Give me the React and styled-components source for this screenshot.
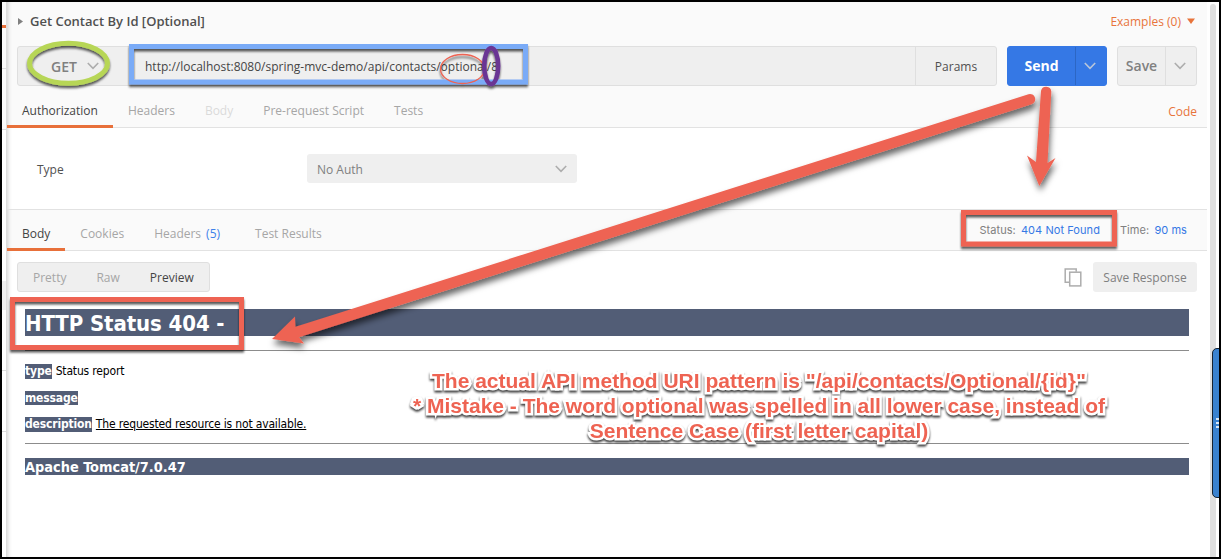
import React from 'react';
import styled, { createGlobalStyle } from 'styled-components';

const Global = createGlobalStyle`
  * { box-sizing: border-box; }
  body { margin: 0; background: #000; overflow: hidden; }
`;

const Frame = styled.div`
  position: relative;
  width: 1221px;
  height: 559px;
  padding: 2px;
  background: #000;
  display: flex;
  overflow: hidden;
  font-family: 'Open Sans', 'Liberation Sans', sans-serif;
  font-size: 12px;
  color: #505050;
`;

const Sidebar = styled.div`
  width: 5px;
  flex: none;
  display: flex;
  flex-direction: column;
  background: #fff;
  border-right: 1px solid #dcdcdc;
`;
const Slice = styled.div`
  height: ${(p) => p.$h}px;
  background: ${(p) => p.$bg || '#fff'};
  border-bottom: ${(p) => p.$line || 0}px solid ${(p) => p.$color || '#dcdcdc'};
`;

const Panel = styled.main`
  width: 1200px;
  height: 555px;
  display: flex;
  flex-direction: column;
  background: #fff;
  box-shadow: inset 4px 0 4px -3px rgba(0, 0, 0, 0.18);
`;

const Gutter = styled.div`
  flex: none;
  width: 12px;
  padding: 2px 3px 0;
  background: #fff;
`;
const Thumb = styled.div`
  width: 6px;
  height: 553px;
  border-radius: 3px 3px 0 0;
  background: #e0e0e0;
`;

const RequestArea = styled.section`
  height: 126px;
  border-bottom: 1px solid #e2e2e2;
  background: rgba(0, 0, 0, 0.02);
`;

const TitleRow = styled.header`
  height: 44px;
  padding: 0 12px 6px 11px;
  display: flex;
  align-items: center;
  justify-content: space-between;
`;
const Title = styled.h1`
  margin: 0;
  display: flex;
  align-items: center;
  gap: 7px;
  font-size: 13px;
  font-weight: 600;
`;
const LinkText = styled.span`
  display: inline-flex;
  align-items: center;
  gap: 6px;
  color: #e8743b;
  font-size: 12px;
  white-space: nowrap;
`;

const UrlRow = styled.div`
  display: flex;
  gap: 10px;
  padding-left: 10px;
  height: 40px;
`;
const Field = styled.div`
  width: 980px;
  display: flex;
  border: 1px solid #dfdfdf;
  border-radius: 3px;
  background: #efefef;
`;
const Method = styled.div`
  width: 112px;
  display: flex;
  align-items: center;
  padding-left: 33px;
  gap: 10px;
  border-right: 1px solid #dfdfdf;
  font-size: 14px;
  font-weight: 600;
  color: #808080;
`;
const Url = styled.div`
  flex: 1;
  padding-left: 15px;
  line-height: 39px;
  color: #454545;
  white-space: nowrap;
`;
const Params = styled.div`
  width: 81px;
  border-left: 1px solid #dfdfdf;
  text-align: center;
  line-height: 39px;
  color: #505050;
`;
const SplitButton = styled.div`
  width: ${(p) => p.$w}px;
  display: flex;
  border-radius: 3px;
  font-size: 14px;
  font-weight: ${(p) => (p.$primary ? 700 : 600)};
  color: ${(p) => (p.$primary ? '#fff' : '#808080')};
  background: ${(p) => (p.$primary ? '#3578e5' : '#efefef')};
  border: 1px solid ${(p) => (p.$primary ? '#3578e5' : '#dfdfdf')};
`;
const SplitMain = styled.div`
  flex: 1;
  text-align: center;
  line-height: 38px;
`;
const SplitToggle = styled.div`
  width: 31px;
  display: flex;
  align-items: center;
  justify-content: center;
  padding-right: 2px;
  border-left: 1px solid ${(p) => (p.$primary ? '#2c66c4' : '#dfdfdf')};
`;

const Tabs = styled.nav`
  height: ${(p) => p.$h}px;
  display: flex;
`;
const Tab = styled.div`
  padding: ${(p) => p.$top}px 15px 0;
  line-height: 18px;
  font-size: 12px;
  white-space: nowrap;
  color: ${(p) => (p.$active ? '#444' : p.$faint ? '#dadada' : '#a6a6a6')};
  border-bottom: 3px solid ${(p) => (p.$active ? '#e8703a' : 'transparent')};
`;
const Count = styled.span`
  margin: 0 5px 0 5px;
  color: #3f82ea;
`;
const TabsEnd = styled.div`
  margin-left: auto;
  padding: ${(p) => p.$top}px 10px 0 0;
  line-height: 18px;
`;

const AuthArea = styled.section`
  height: 81px;
  display: flex;
  align-items: center;
  padding-left: 30px;
`;
const AuthLabel = styled.label`
  width: 270px;
  padding-top: 1px;
`;
const Select = styled.div`
  width: 270px;
  height: 29px;
  display: flex;
  align-items: center;
  justify-content: space-between;
  padding: 1px 10px 0;
  border-radius: 3px;
  background: #efefef;
  color: #808080;
`;

const ResponseTabs = styled.section`
  height: 42px;
  border-top: 1px solid #e2e2e2;
  border-bottom: 1px solid #e2e2e2;
  background: rgba(0, 0, 0, 0.02);
`;
const Metrics = styled.div`
  margin-left: auto;
  padding: 11px 20px 0 0;
  display: flex;
  gap: 20px;
  font-family: Inter, Roboto, sans-serif;
  font-size: 11px;
  line-height: 18px;
  letter-spacing: 0.06px;
  color: #808080;
`;
const Value = styled.span`
  margin-left: 2px;
  color: #3578e5;
`;

const Toolbar = styled.div`
  height: 58px;
  display: flex;
  align-items: flex-start;
  padding: 11px 10px 0;
`;
const Segments = styled.div`
  width: 193px;
  height: 30px;
  display: flex;
  gap: 30px;
  padding-left: 15px;
  border: 1px solid #dfdfdf;
  border-radius: 3px;
  background: #efefef;
  line-height: 29px;
`;
const Segment = styled.span`
  color: ${(p) => (p.$active ? '#444' : '#a6a6a6')};
`;
const Actions = styled.div`
  margin-left: auto;
  display: flex;
  align-items: center;
  gap: 11px;
`;
const SaveResponse = styled.div`
  width: 104px;
  height: 30px;
  line-height: 31px;
  text-align: center;
  border-radius: 3px;
  background: #efefef;
  color: #808080;
  white-space: nowrap;
`;

const Preview = styled.article`
  width: 1182px;
  padding-left: 18px;
  font-family: 'DejaVu Sans Condensed', 'DejaVu Sans', sans-serif;
  color: #000;
`;
const Banner = styled.div`
  height: ${(p) => p.$h}px;
  line-height: ${(p) => p.$lh}px;
  font-size: ${(p) => p.$size}px;
  font-weight: 700;
  letter-spacing: ${(p) => p.$ls || 0}px;
  white-space: nowrap;
  color: #fff;
  background: #525d76;
`;
const Rule = styled.hr`
  height: 1px;
  margin: ${(p) => p.$m};
  border: 0;
  background: #8c8c8c;
`;
const Line = styled.p`
  margin: 0 0 12px;
  height: 14.6px;
  line-height: 14.6px;
  display: flex;
  gap: 4px;
  font-size: 12px;
  letter-spacing: -0.16px;
`;
const Key = styled.b`
  color: #fff;
  background: #525d76;
`;

const SideHandle = styled.div`
  position: absolute;
  left: 1212px;
  top: 348px;
  width: 14px;
  height: 150px;
  border: 1.5px solid #16222f;
  border-radius: 5px;
  background: #3a82cf;
  display: flex;
  flex-direction: column;
  justify-content: center;
  gap: 2px;
  padding-left: 3px;
`;
const Grip = styled.i`
  width: 4px;
  height: 2px;
  background: #dbe8f6;
`;
const RightEdge = styled.div`
  position: absolute;
  right: 0;
  top: 0;
  width: 2px;
  height: 559px;
  background: #000;
`;

const Markup = styled.svg`
  position: absolute;
  left: 0;
  top: 0;
  pointer-events: none;
  overflow: visible;
`;
const Callout = styled.div`
  position: absolute;
  left: 379px;
  top: 368px;
  width: 760px;
  text-align: center;
  font: 700 21px/25px 'Liberation Sans', Arial, sans-serif;
  color: #ee6352;
  -webkit-text-stroke: 5px #fff;
  paint-order: stroke fill;
  stroke-linejoin: round;
  filter: drop-shadow(0 2px 1px rgba(0, 0, 0, 0.75));
`;
const CalloutLine = styled.div`
  white-space: nowrap;
`;

const Chevron = ({ color = '#adadad' }) => (
  <svg width="12" height="8" viewBox="0 0 12 8" fill="none" stroke={color} strokeWidth="1.6">
    <path d="M0.8 1 L6 6.3 L11.2 1" />
  </svg>
);

const CopyIcon = () => (
  <svg width="18" height="19" viewBox="0 0 18 19" fill="none" stroke="#adadad" strokeWidth="1.5">
    <path d="M5 14.3H1.2V1h11v2.8" />
    <rect x="5.7" y="4.2" width="11.1" height="13.7" />
  </svg>
);

export default function App() {
  return (
    <Frame>
      <Global />
      <Sidebar>
        <Slice $h={26} $line={3} $color="#e8703a" $bg="#fafafa" />
        <Slice $h={41} $line={1} $bg="#fafafa" />
        <Slice $h={61} $line={1} $bg="#fafafa" />
        <Slice $h={151} />
        <Slice $h={29} $bg="#efefef" />
        <Slice $h={61} $line={1} />
        <Slice $h={61} $line={1} />
      </Sidebar>
      <Panel>
        <RequestArea>
          <TitleRow>
            <Title>
              <svg width="5" height="7"><path d="M0 0L5 3.5L0 7Z" fill="#808080" /></svg>
              Get Contact By Id [Optional]
            </Title>
            <LinkText>
              Examples (0)
              <svg width="8" height="6"><path d="M0 0.5H8L4 6Z" fill="#e8743b" /></svg>
            </LinkText>
          </TitleRow>
          <UrlRow>
            <Field>
              <Method>GET <Chevron /></Method>
              <Url>http://localhost:8080/spring-mvc-demo/api/contacts/optional/8</Url>
              <Params>Params</Params>
            </Field>
            <SplitButton $w={100} $primary>
              <SplitMain>Send</SplitMain>
              <SplitToggle $primary><Chevron color="#b9c6da" /></SplitToggle>
            </SplitButton>
            <SplitButton $w={80}>
              <SplitMain>Save</SplitMain>
              <SplitToggle><Chevron /></SplitToggle>
            </SplitButton>
          </UrlRow>
          <Tabs $h={42}>
            <Tab $top={16} $active>Authorization</Tab>
            <Tab $top={16}>Headers</Tab>
            <Tab $top={16} $faint>Body</Tab>
            <Tab $top={16}>Pre-request Script</Tab>
            <Tab $top={16}>Tests</Tab>
            <TabsEnd $top={17}><LinkText>Code</LinkText></TabsEnd>
          </Tabs>
        </RequestArea>
        <AuthArea>
          <AuthLabel>Type</AuthLabel>
          <Select>No Auth <Chevron /></Select>
        </AuthArea>
        <ResponseTabs>
          <Tabs $h={41}>
            <Tab $top={15} $active>Body</Tab>
            <Tab $top={15}>Cookies</Tab>
            <Tab $top={15}>Headers<Count>(5)</Count></Tab>
            <Tab $top={15}>Test Results</Tab>
            <Metrics>
              <span>Status: <Value>404 Not Found</Value></span>
              <span>Time: <Value>90 ms</Value></span>
            </Metrics>
          </Tabs>
        </ResponseTabs>
        <Toolbar>
          <Segments>
            <Segment>Pretty</Segment>
            <Segment>Raw</Segment>
            <Segment $active>Preview</Segment>
          </Segments>
          <Actions>
            <CopyIcon />
            <SaveResponse>Save Response</SaveResponse>
          </Actions>
        </Toolbar>
        <Preview>
          <Banner $h={27} $lh={29} $size={22} $ls={-0.1}>HTTP Status 404 -</Banner>
          <Rule $m="14px 0 13px" />
          <Line><Key>type</Key><span>Status report</span></Line>
          <Line><Key>message</Key></Line>
          <Line><Key>description</Key><u>The requested resource is not available.</u></Line>
          <Rule $m="-1px 0 14px" />
          <Banner $h={17} $lh={18} $size={14.4}>Apache Tomcat/7.0.47</Banner>
        </Preview>
      </Panel>
      <Gutter><Thumb /></Gutter>
      <SideHandle><Grip /><Grip /><Grip /></SideHandle>
      <RightEdge />

      <Markup width="1221" height="559" fill="none">
        <defs>
          <filter id="hard" x="-20%" y="-20%" width="140%" height="150%">
            <feDropShadow dx="0" dy="2.5" stdDeviation="0.8" floodColor="#000" floodOpacity="0.65" />
          </filter>
          <filter id="soft" x="-20%" y="-20%" width="150%" height="150%">
            <feDropShadow dx="1" dy="5" stdDeviation="3" floodColor="#000" floodOpacity="0.6" />
          </filter>
        </defs>
        <g filter="url(#hard)">
          <ellipse cx="68.5" cy="63.3" rx="39" ry="20" stroke="#b7d657" strokeWidth="5" />
          <rect x="131.5" y="46.5" width="394" height="35.5" stroke="#7aabf7" strokeWidth="5" />
          <ellipse cx="462.5" cy="69" rx="22" ry="14.5" stroke="#ee6352" strokeWidth="1.3" />
          <ellipse cx="491.2" cy="66" rx="7" ry="18" stroke="#6b3494" strokeWidth="4.5" />
          <rect x="963.5" y="212.5" width="151" height="31.5" stroke="#ee6352" strokeWidth="5" />
          <rect x="12.5" y="299.5" width="229" height="48" stroke="#ee6352" strokeWidth="5" />
        </g>
        <g filter="url(#soft)" fill="#ee6352">
          <path d="M1028.5 94.2 A5.2 5.2 0 0 1 1031.5 104.2 L299 337.2 L304 343.5 L272 339 L295 316.5 L295.5 326.8 Z" />
          <path d="M1041 91 A5.2 5.2 0 0 1 1051.3 91.5 L1047.5 163 L1055.5 158 L1039.3 186 L1027 155.5 L1036 162 Z" />
        </g>
      </Markup>
      <Callout>
        <CalloutLine>The actual API method URI pattern is "/api/contacts/Optional/{'{'}id{'}'}"</CalloutLine>
        <CalloutLine>* Mistake - The word optional was spelled in all lower case, instead of</CalloutLine>
        <CalloutLine>Sentence Case (first letter capital)</CalloutLine>
      </Callout>
    </Frame>
  );
}
